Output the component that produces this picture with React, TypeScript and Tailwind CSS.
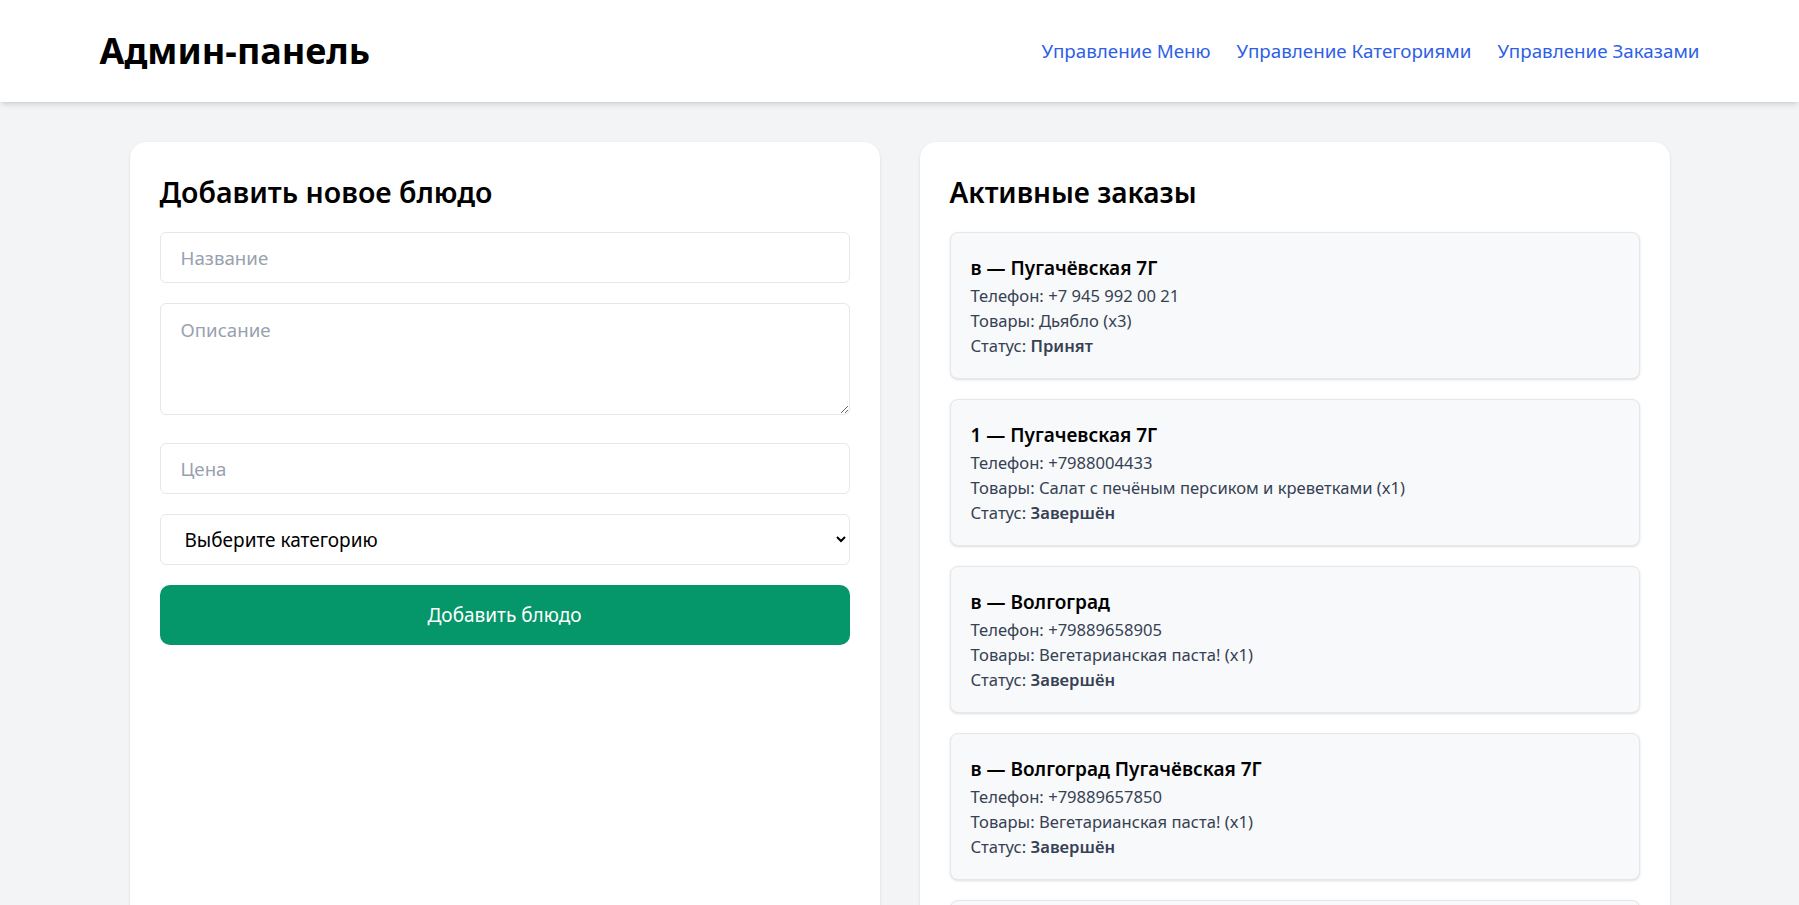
import React from "react";

interface Order {
  title: string;
  phone: string;
  items: string;
  status: string;
}

const orders: Order[] = [
  { title: "в — Пугачёвская 7Г", phone: "+7 945 992 00 21", items: "Дьябло (x3)", status: "Принят" },
  { title: "1 — Пугачевская 7Г", phone: "+7988004433", items: "Салат с печёным персиком и креветками (x1)", status: "Завершён" },
  { title: "в — Волгоград", phone: "+79889658905", items: "Вегетарианская паста! (x1)", status: "Завершён" },
  { title: "в — Волгоград Пугачёвская 7Г", phone: "+79889657850", items: "Вегетарианская паста! (x1)", status: "Завершён" },
  { title: "в — Волгоград", phone: "+79889650000", items: "Дьябло (x1)", status: "Завершён" },
];

const fieldClass =
  "w-full h-[51px] px-5 rounded-md border border-gray-200 bg-white text-[18.7px] text-black placeholder:text-gray-400 outline-none";

function OrderCard({ title, phone, items, status }: Order) {
  return (
    <div className="rounded-lg border border-gray-200 bg-[#f8f9fa] shadow-sm p-5">
      <div className="text-[19px] leading-[30px] font-semibold text-black">{title}</div>
      <div className="text-[16.6px] leading-[25px] text-gray-700">Телефон: {phone}</div>
      <div className="text-[16.6px] leading-[25px] text-gray-700">Товары: {items}</div>
      <div className="text-[16.6px] leading-[25px] text-gray-700">
        Статус: <span className="font-semibold">{status}</span>
      </div>
    </div>
  );
}

export default function App() {
  return (
    <div className="min-h-screen bg-gray-100 font-['Noto_Sans',sans-serif]">
      <header className="bg-white shadow-md">
        <div className="w-[1600px] mx-auto h-[102px] flex items-center justify-between">
          <h1 className="text-4xl leading-10 font-bold text-black">Админ-панель</h1>
          <nav className="flex items-center gap-[26px] text-[18.8px] text-[#2f5fe6]">
            <a href="#">Управление Меню</a>
            <a href="#">Управление Категориями</a>
            <a href="#">Управление Заказами</a>
          </nav>
        </div>
      </header>

      <main className="w-[1540px] mx-auto pt-10 grid grid-cols-2 gap-10">
        <section className="bg-white rounded-2xl shadow-sm p-[30px]">
          <h2 className="text-[28.5px] leading-10 font-semibold text-black mb-5">Добавить новое блюдо</h2>
          <div className="flex flex-col">
            <input className={fieldClass} placeholder="Название" />
            <textarea
              rows={3}
              className="w-full h-[112px] mt-5 px-5 py-3 rounded-md border border-gray-200 bg-white text-[18.7px] text-black placeholder:text-gray-400 outline-none"
              placeholder="Описание"
            />
            <input className={fieldClass + " mt-7"} placeholder="Цена" />
            <select className={fieldClass + " mt-5 h-[50px] text-[19px]"} defaultValue="">
              <option value="">Выберите категорию</option>
            </select>
            <button className="mt-5 h-[60px] w-full rounded-[10px] bg-[#059669] text-white text-[19px]">
              Добавить блюдо
            </button>
          </div>
        </section>

        <section className="bg-white rounded-2xl shadow-sm p-[30px]">
          <h2 className="text-[28px] leading-10 font-semibold text-black mb-5">Активные заказы</h2>
          <div className="flex flex-col gap-5">
            {orders.map((o, i) => (
              <OrderCard key={i} {...o} />
            ))}
          </div>
        </section>
      </main>
    </div>
  );
}
